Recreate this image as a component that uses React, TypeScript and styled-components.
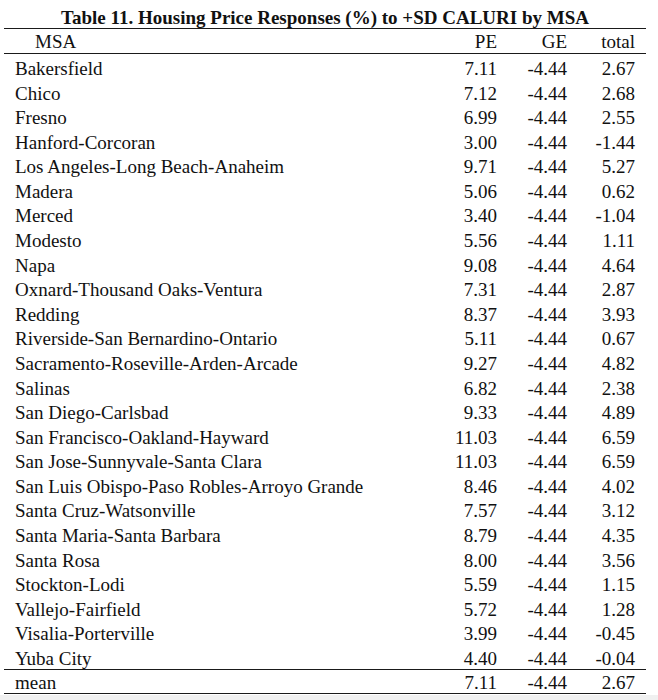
import React from "react";
import styled, { createGlobalStyle } from "styled-components";

const GlobalStyle = createGlobalStyle`
  html, body {
    margin: 0;
    padding: 0;
    background: #f0f0f0;
  }
`;

const Page = styled.div`
  width: 658px;
  height: 695px;
  background: #ffffff;
  box-sizing: border-box;
  padding: 0 12px 0 4px;
  font-family: "Liberation Serif", "Times New Roman", serif;
  color: #111111;
`;

const Title = styled.div`
  padding-top: 7px;
  height: 21px;
  line-height: 21px;
  font-size: 19px;
  font-weight: bold;
  text-align: center;
  white-space: nowrap;
`;

const Row = styled.div<{ $kind?: "head" | "data" | "mean" }>`
  display: grid;
  grid-template-columns: 1fr 80px 70px 79px;
  font-size: 19px;
  white-space: nowrap;
  box-sizing: border-box;
  ${({ $kind }) =>
    $kind === "head"
      ? `
    border-top: 1px solid #1a1a1a;
    border-bottom: 1px solid #1a1a1a;
    height: 26px;
    padding-top: 2px;
    line-height: 22px;
  `
      : $kind === "mean"
      ? `
    border-top: 1px solid #1a1a1a;
    border-bottom: 1px solid #1a1a1a;
    height: 25px;
    padding-top: 3px;
    line-height: 20px;
  `
      : `
    height: 24.58px;
    padding-top: 3px;
    line-height: 21.58px;
  `}
`;

const Body = styled.div`
  padding-top: 1px;
`;

const NameCell = styled.div<{ $indent?: number }>`
  padding-left: ${({ $indent }) => $indent ?? 11}px;
`;

const NumCell = styled.div<{ $last?: boolean }>`
  text-align: right;
  padding-right: ${({ $last }) => ($last ? 11 : 0)}px;
`;

const rows: [string, string, string, string][] = [
  ["Bakersfield", "7.11", "-4.44", "2.67"],
  ["Chico", "7.12", "-4.44", "2.68"],
  ["Fresno", "6.99", "-4.44", "2.55"],
  ["Hanford-Corcoran", "3.00", "-4.44", "-1.44"],
  ["Los Angeles-Long Beach-Anaheim", "9.71", "-4.44", "5.27"],
  ["Madera", "5.06", "-4.44", "0.62"],
  ["Merced", "3.40", "-4.44", "-1.04"],
  ["Modesto", "5.56", "-4.44", "1.11"],
  ["Napa", "9.08", "-4.44", "4.64"],
  ["Oxnard-Thousand Oaks-Ventura", "7.31", "-4.44", "2.87"],
  ["Redding", "8.37", "-4.44", "3.93"],
  ["Riverside-San Bernardino-Ontario", "5.11", "-4.44", "0.67"],
  ["Sacramento-Roseville-Arden-Arcade", "9.27", "-4.44", "4.82"],
  ["Salinas", "6.82", "-4.44", "2.38"],
  ["San Diego-Carlsbad", "9.33", "-4.44", "4.89"],
  ["San Francisco-Oakland-Hayward", "11.03", "-4.44", "6.59"],
  ["San Jose-Sunnyvale-Santa Clara", "11.03", "-4.44", "6.59"],
  ["San Luis Obispo-Paso Robles-Arroyo Grande", "8.46", "-4.44", "4.02"],
  ["Santa Cruz-Watsonville", "7.57", "-4.44", "3.12"],
  ["Santa Maria-Santa Barbara", "8.79", "-4.44", "4.35"],
  ["Santa Rosa", "8.00", "-4.44", "3.56"],
  ["Stockton-Lodi", "5.59", "-4.44", "1.15"],
  ["Vallejo-Fairfield", "5.72", "-4.44", "1.28"],
  ["Visalia-Porterville", "3.99", "-4.44", "-0.45"],
  ["Yuba City", "4.40", "-4.44", "-0.04"],
];

export default function App() {
  return (
    <>
      <GlobalStyle />
      <Page>
        <Title>Table 11. Housing Price Responses (%) to +SD CALURI by MSA</Title>
        <Row $kind="head">
          <NameCell $indent={31}>MSA</NameCell>
          <NumCell>PE</NumCell>
          <NumCell>GE</NumCell>
          <NumCell $last>total</NumCell>
        </Row>
        <Body>
          {rows.map(([name, pe, ge, total]) => (
            <Row key={name} $kind="data">
              <NameCell>{name}</NameCell>
              <NumCell>{pe}</NumCell>
              <NumCell>{ge}</NumCell>
              <NumCell $last>{total}</NumCell>
            </Row>
          ))}
        </Body>
        <Row $kind="mean">
          <NameCell>mean</NameCell>
          <NumCell>7.11</NumCell>
          <NumCell>-4.44</NumCell>
          <NumCell $last>2.67</NumCell>
        </Row>
      </Page>
    </>
  );
}
